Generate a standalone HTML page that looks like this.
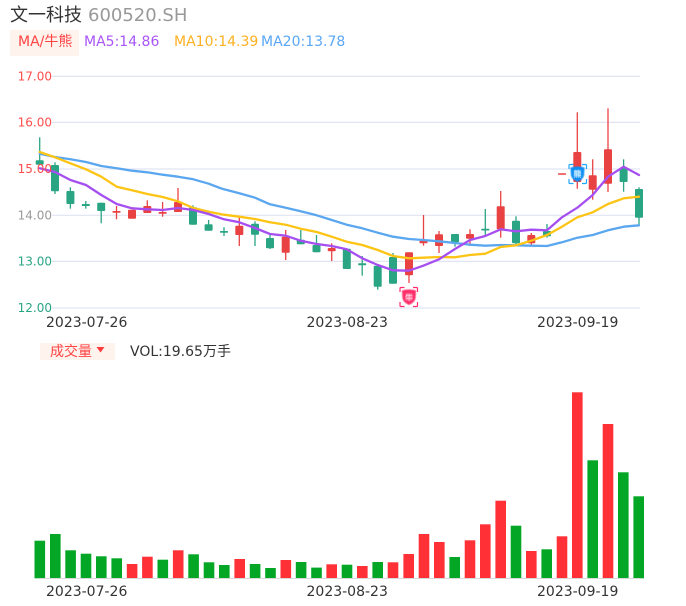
<!DOCTYPE html>
<html><head><meta charset="utf-8"><style>
html,body{margin:0;padding:0;background:#fff;width:686px;height:606px;overflow:hidden}
svg{display:block}
text{font-family:"DejaVu Sans","Noto Sans CJK SC",sans-serif}
.g line{stroke:#2aa584;stroke-width:1.3}.g rect{fill:#2aa584}
.r line{stroke:#e94242;stroke-width:1.3}.r rect{fill:#e94242}
.vg rect{fill:#03a625}
.vr rect{fill:#ff3036}
.d{font-size:14px;fill:#333}
</style></head><body>
<svg width="686" height="606" viewBox="0 0 686 606" xmlns="http://www.w3.org/2000/svg">
<defs><filter id="b" x="-20%" y="-20%" width="140%" height="140%"><feGaussianBlur stdDeviation="0.5"/></filter></defs>
<text x="10" y="21" font-size="18" fill="#333">文一科技</text>
<text x="88" y="21" font-size="18" fill="#999">600520.SH</text>
<rect x="10" y="30" width="69" height="26" fill="#fff3ee"/>
<text x="18" y="46" font-size="14" fill="#ff4444">MA/牛熊</text>
<text x="84" y="46" font-size="14" fill="#a855f7">MA5:14.86</text>
<text x="174" y="46" font-size="14" fill="#fdb022">MA10:14.39</text>
<text x="261" y="46" font-size="14" fill="#5aa7f5">MA20:13.78</text>

<g stroke="#e1e5f2" stroke-width="1.2">
<line x1="52" x2="640" y1="76.4" y2="76.4"/><line x1="52" x2="640" y1="122.4" y2="122.4"/><line x1="52" x2="640" y1="169" y2="169"/><line x1="52" x2="640" y1="215.3" y2="215.3"/><line x1="52" x2="640" y1="261.4" y2="261.4"/><line x1="52" x2="640" y1="308" y2="308"/>
</g>

<g class="g">
<line x1="39.7" x2="39.7" y1="137.3" y2="165"/><rect x="35.7" y="160.3" width="8" height="4.4" rx="1"/>
<line x1="55" x2="55" y1="162.3" y2="194"/><rect x="51" y="165" width="8" height="26.3" rx="1"/>
<line x1="70.4" x2="70.4" y1="187.3" y2="208.7"/><rect x="66.4" y="191" width="8" height="13" rx="1"/>
<line x1="85.8" x2="85.8" y1="201" y2="208.7"/><rect x="81.8" y="204" width="8" height="2" rx=".5"/>
<line x1="101.2" x2="101.2" y1="202.7" y2="223.3"/><rect x="97.2" y="202.7" width="8" height="8.3" rx="1"/>
<line x1="193" x2="193" y1="205.3" y2="224.7"/><rect x="189" y="207.3" width="8" height="17.4" rx="1"/>
<line x1="208.6" x2="208.6" y1="220" y2="230.7"/><rect x="204.6" y="224.3" width="8" height="6.4" rx="1"/>
<line x1="224" x2="224" y1="227.3" y2="236"/><rect x="220" y="231" width="8" height="1.7" rx=".5"/>
<line x1="255" x2="255" y1="221.3" y2="246"/><rect x="251" y="223.7" width="8" height="11" rx="1"/>
<line x1="270" x2="270" y1="235" y2="249"/><rect x="266" y="238" width="8" height="10.3" rx="1"/>
<line x1="300.8" x2="300.8" y1="230" y2="244.3"/><rect x="296.8" y="239.7" width="8" height="4.6" rx="1"/>
<line x1="316.5" x2="316.5" y1="235" y2="252.3"/><rect x="312.5" y="245" width="8" height="7.3" rx="1"/>
<line x1="346.8" x2="346.8" y1="248.7" y2="269"/><rect x="342.8" y="248.7" width="8" height="20.3" rx="1"/>
<line x1="362.2" x2="362.2" y1="256" y2="275.7"/><rect x="358.2" y="263.3" width="8" height="2" rx=".5"/>
<line x1="377.7" x2="377.7" y1="264.3" y2="289.7"/><rect x="373.7" y="265.7" width="8" height="21" rx="1"/>
<line x1="393" x2="393" y1="253" y2="283.7"/><rect x="389" y="257" width="8" height="26.7" rx="1"/>
<line x1="455" x2="455" y1="234" y2="246.7"/><rect x="451" y="234" width="8" height="8.3" rx="1"/>
<line x1="485.3" x2="485.3" y1="209" y2="235"/><rect x="481.3" y="228.7" width="8" height="1.8" rx=".5"/>
<line x1="516" x2="516" y1="216.3" y2="245.3"/><rect x="512" y="220.7" width="8" height="22.6" rx="1"/>
<line x1="547" x2="547" y1="224" y2="237.7"/><rect x="543" y="231" width="8" height="5.3" rx="1"/>
<line x1="623.6" x2="623.6" y1="159.3" y2="191.7"/><rect x="619.6" y="168.3" width="8" height="13.7" rx="1"/>
<line x1="639" x2="639" y1="187.3" y2="225"/><rect x="635" y="189" width="8" height="28.7" rx="1"/>
</g>
<g class="r">
<line x1="116.5" x2="116.5" y1="206" y2="219.3"/><rect x="112.5" y="211" width="8" height="1.8" rx=".5"/>
<rect x="128" y="209.7" width="8" height="9" rx="1"/>
<line x1="147.3" x2="147.3" y1="200.3" y2="213"/><rect x="143.3" y="206" width="8" height="7" rx="1"/>
<line x1="162.6" x2="162.6" y1="202" y2="216.7"/><rect x="158.6" y="212" width="8" height="1.8" rx=".5"/>
<line x1="178" x2="178" y1="188" y2="212"/><rect x="174" y="202" width="8" height="10" rx="1"/>
<line x1="239.3" x2="239.3" y1="217.3" y2="246"/><rect x="235.3" y="225.7" width="8" height="9.3" rx="1"/>
<line x1="285.7" x2="285.7" y1="230" y2="260"/><rect x="281.7" y="236.7" width="8" height="16" rx="1"/>
<line x1="331.7" x2="331.7" y1="243.3" y2="261"/><rect x="327.7" y="248" width="8" height="3.3" rx="1"/>
<line x1="409" x2="409" y1="252.3" y2="283"/><rect x="405" y="252.3" width="8" height="23" rx="1"/>
<line x1="423.5" x2="423.5" y1="215" y2="245.7"/><rect x="419.5" y="241" width="8" height="2.3" rx=".5"/>
<line x1="439" x2="439" y1="231" y2="253"/><rect x="435" y="234.3" width="8" height="11.7" rx="1"/>
<line x1="470" x2="470" y1="229.3" y2="246"/><rect x="466" y="234" width="8" height="4.7" rx="1"/>
<line x1="500.7" x2="500.7" y1="191" y2="237.7"/><rect x="496.7" y="206.3" width="8" height="23" rx="1"/>
<line x1="531.3" x2="531.3" y1="233" y2="245.3"/><rect x="527.3" y="235" width="8" height="8.3" rx="1"/>
<rect x="558" y="173.3" width="8" height="1.5" rx=".5"/>
<line x1="577.3" x2="577.3" y1="112.3" y2="188.7"/><rect x="573.3" y="152" width="8" height="30" rx="1"/>
<line x1="592.7" x2="592.7" y1="159.3" y2="199.7"/><rect x="588.7" y="175.3" width="8" height="14.4" rx="1"/>
<line x1="608" x2="608" y1="108.3" y2="192"/><rect x="604" y="149.3" width="8" height="34.4" rx="1"/>
</g>

<g fill="none" stroke-width="2.3" stroke-linejoin="round" stroke-linecap="round">
<polyline stroke="#5aa7f0" points="39.7,153.7 55,157 70.4,159.3 86,162 101.3,166 116.7,168.3 132,170.7 147.3,172.3 162.7,174.7 178,176.7 193.3,179.3 208.7,183.7 220,188 224,189.3 239.3,193.3 255,197.7 270,204.3 285.7,207.7 300.7,211.3 316.7,215.3 331.7,220 346.7,224.7 362.3,228.3 377.7,232.7 393,236.7 409,239 423.3,240 439,241.3 455,243 470,244.7 485.3,245.7 500.7,245 516,245.3 531.3,245.7 547,246 562,242.3 577.3,237.7 592.7,235 608,230.3 623.7,226.7 639,225.3"/>
<polyline stroke="#fdc414" points="39.7,152 55,157.3 70.4,163.3 86,169.3 101.3,176.7 116.7,186.7 132,190.3 147.3,194 162.7,197 178,201.3 193.3,208 208.7,211.7 224,214.7 239.3,216.7 255,219 270,222.3 285.7,224.7 300.7,228.7 316.7,232 331.7,236.7 346.7,241.7 362.3,245 377.7,250 393,256 409,258.3 423.3,257.7 439,257 455,257.3 470,255 485.3,253.7 500.7,247 516,245.3 531.3,240.7 547,235 562,226.7 577.3,217.3 592.7,212.3 608,204 623.7,198.3 639,196.7"/>
<polyline stroke="#a64ff0" points="39.7,168.3 55,172 70.4,180 86,185 101.3,195 116.7,204 132,208.3 147.3,209.3 162.7,210 178,208 193.3,210 208.7,214 224,219.3 239.3,222.3 255,228 270,234 285.7,235.7 300.7,240.7 316.7,244 331.7,246 346.7,249.3 362.3,258.3 377.7,265 393,270.3 409,270.7 423.3,265.7 439,259.3 455,249 470,240 485.3,236 500.7,229.3 516,231.3 531.3,229.7 547,230.3 562,217.3 577.3,207.7 592.7,195 608,176.7 623.7,166.7 639,175"/>
</g>

<text x="52" y="80.5" font-size="12" fill="#ff4d4d" text-anchor="end">17.00</text>
<text x="52" y="126.5" font-size="12" fill="#ff4d4d" text-anchor="end">16.00</text>
<text x="52" y="173" font-size="12" fill="#ff4d4d" text-anchor="end">15.00</text>
<text x="52" y="219.3" font-size="12" fill="#999" text-anchor="end">14.00</text>
<text x="52" y="265.5" font-size="12" fill="#2aa584" text-anchor="end">13.00</text>
<text x="52" y="312" font-size="12" fill="#2aa584" text-anchor="end">12.00</text>

<!-- bull icon -->
<path d="M400 292v-3.500q0-1 1-1h3.500M413 287.500h3.500q1 0 1 1v3.500M417.500 302v3.500q0 1-1 1H413M404.500 306.500H401q-1 0-1-1V302" fill="none" stroke="#ff2d6b" stroke-width="1.2"/>
<path d="M402 290.500q7-2 14 0l-.5 8q-1 4-6.500 6.500q-5.500-2.500-6.500-6.500z" fill="#ff2d6b" filter="url(#b)"/>
<rect x="405.500" y="293.500" width="7" height="7" rx="1" fill="#ff7da3" filter="url(#b)"/>
<text x="409" y="300.500" font-size="8" fill="#ffd5e2" text-anchor="middle">牛</text>
<!-- bear icon -->
<path d="M569 169v-3.500q0-1 1-1h3.500M582 164.500h3.500q1 0 1 1v3.500M586.500 179v3.500q0 1-1 1H582M573.500 183.500H570q-1 0-1-1V179" fill="none" stroke="#1ea7ff" stroke-width="1.2"/>
<path d="M570.500 167.500q7-2 14 0l-.5 8q-1 4-6.500 6.500q-5.500-2.500-6.500-6.500z" fill="#0e8ff2" filter="url(#b)"/>
<rect x="574" y="170" width="7" height="7" rx="1" fill="#7cc8ff" filter="url(#b)"/>
<text x="577.500" y="177" font-size="8" fill="#d5efff" text-anchor="middle">熊</text>

<text class="d" x="46" y="327">2023-07-26</text>
<text class="d" x="306.500" y="327">2023-08-23</text>
<text class="d" x="537" y="327">2023-09-19</text>

<rect x="40" y="343" width="75" height="17" fill="#fff3ee"/>
<text x="50" y="356" font-size="14" fill="#ff4444">成交量</text>
<path d="M96.500 347h8l-4 5.500z" fill="#ff3b3b"/>
<text x="130" y="356" font-size="14" fill="#333">VOL:19.65万手</text>

<g class="vg">
<rect x="34.500" y="540.700" width="10.600" height="37.600"/>
<rect x="50" y="534" width="10.600" height="44.300"/>
<rect x="65.300" y="550.300" width="10.600" height="28"/>
<rect x="80.700" y="553.700" width="10.600" height="24.600"/>
<rect x="96" y="556.300" width="10.600" height="22"/>
<rect x="111.400" y="558.300" width="10.600" height="20"/>
<rect x="157.500" y="559.700" width="10.600" height="18.600"/>
<rect x="188.300" y="554.300" width="10.600" height="24"/>
<rect x="203.700" y="562.300" width="10.600" height="16"/>
<rect x="219" y="565" width="10.600" height="13.300"/>
<rect x="249.800" y="564" width="10.600" height="14.300"/>
<rect x="265.200" y="568" width="10.600" height="10.300"/>
<rect x="295.800" y="562" width="10.600" height="16.300"/>
<rect x="311.200" y="567.600" width="10.600" height="10.700"/>
<rect x="341.700" y="564.700" width="10.600" height="13.600"/>
<rect x="372.400" y="562" width="10.600" height="16.300"/>
<rect x="449.400" y="557" width="10.600" height="21.300"/>
<rect x="510.700" y="525.700" width="10.600" height="52.600"/>
<rect x="541.400" y="549.300" width="10.600" height="29"/>
<rect x="587.400" y="460.300" width="10.600" height="118"/>
<rect x="618" y="472.300" width="10.600" height="106"/>
<rect x="633.400" y="496.300" width="10.600" height="82"/>
</g>
<g class="vr">
<rect x="126.800" y="564" width="10.600" height="14.300"/>
<rect x="142.100" y="556.700" width="10.600" height="21.600"/>
<rect x="172.900" y="550.300" width="10.600" height="28"/>
<rect x="234.400" y="559" width="10.600" height="19.300"/>
<rect x="280.500" y="560" width="10.600" height="18.300"/>
<rect x="326.400" y="564.300" width="10.600" height="14"/>
<rect x="357" y="566" width="10.600" height="12.300"/>
<rect x="387.700" y="562.300" width="10.600" height="16"/>
<rect x="403.400" y="554" width="10.600" height="24.300"/>
<rect x="418.700" y="534" width="10.600" height="44.300"/>
<rect x="434" y="542" width="10.600" height="36.300"/>
<rect x="464.700" y="540.300" width="10.600" height="38"/>
<rect x="480" y="524.300" width="10.600" height="54"/>
<rect x="495.400" y="500.700" width="10.600" height="77.600"/>
<rect x="526" y="551" width="10.600" height="27.300"/>
<rect x="556.700" y="536.300" width="10.600" height="42"/>
<rect x="572" y="392.300" width="10.600" height="186"/>
<rect x="602.700" y="424" width="10.600" height="154.300"/>
</g>
<line x1="40" x2="640" y1="578.500" y2="578.500" stroke="#d9d9d9" stroke-width="1"/>
<text class="d" x="46" y="596">2023-07-26</text>
<text class="d" x="306.500" y="596">2023-08-23</text>
<text class="d" x="537" y="596">2023-09-19</text>
</svg>
</body></html>
